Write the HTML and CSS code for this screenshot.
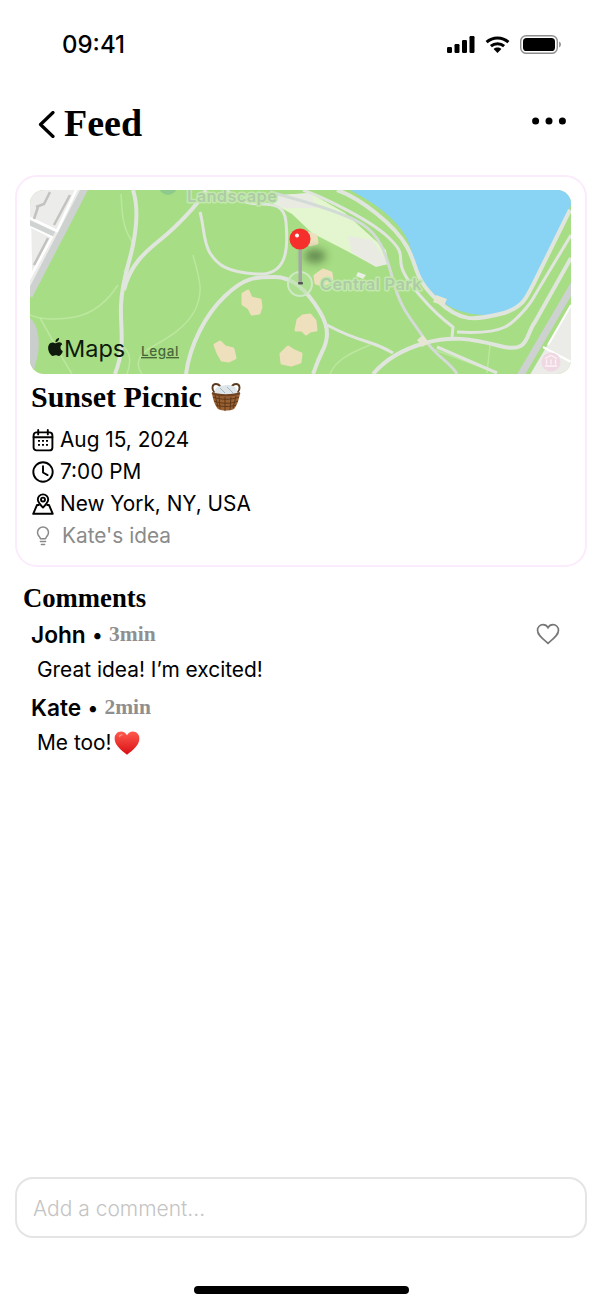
FILE: index.html
```html
<!DOCTYPE html>
<html lang="en">
<head>
<meta charset="utf-8">
<title>Sunset Picnic</title>
<link rel="stylesheet" href="styles.css">
</head>
<body>
<div class="screen">
  <div class="status">
    <span class="time">09:41</span>
    <div class="status-icons">
      <svg class="signal" width="28" height="17" viewBox="0 0 28 17"><rect x="0" y="11" width="5" height="6" rx="1.2"/><rect x="7.5" y="8" width="5" height="9" rx="1.2"/><rect x="15" y="4" width="5" height="13" rx="1.2"/><rect x="22.5" y="0" width="5" height="17" rx="1.2"/></svg>
      <svg class="wifi" width="25" height="17" viewBox="0 0 25 17"><path class="wifi-arc" d="M1.6 6.2C7.6.6 17.4.6 23.4 6.2"/><path class="wifi-arc" d="M5.9 10.2c3.7-3.3 9.5-3.3 13.2 0"/><path d="M12.5 17l-3.9-4.1c2.2-1.9 5.6-1.9 7.8 0z"/></svg>
      <svg class="battery" width="41" height="19" viewBox="0 0 41 19"><rect class="batt-shell" x=".7" y=".7" width="36.6" height="17.6" rx="5.6"/><rect x="3" y="3" width="32" height="13" rx="3.6"/><path class="batt-cap" d="M39 6.5c1.2.4 2 1.6 2 3s-.8 2.6-2 3z"/></svg>
    </div>
  </div>

  <header class="nav">
    <div class="nav-left">
      <svg class="chevron" width="17" height="27" viewBox="0 0 17 27"><path d="M15 1.5L2.5 13.5 15 25.5"/></svg>
      <h1 class="nav-title">Feed</h1>
    </div>
    <svg class="more" width="34" height="8" viewBox="0 0 34 8"><circle cx="3.6" cy="4" r="3.5"/><circle cx="17" cy="4" r="3.5"/><circle cx="30.4" cy="4" r="3.5"/></svg>
  </header>

  <section class="card">
    <svg class="map" width="541" height="184" viewBox="30 190 541 184">
      <defs><filter id="blur" x="-60%" y="-60%" width="220%" height="220%"><feGaussianBlur stdDeviation="4"/></filter></defs>
      <rect class="m-park" x="30" y="190" width="541" height="184"/>

      <!-- west blocks -->
      <path class="m-block" d="M30 190h53l-53 105z"/>
      <path class="m-road-gray-w" d="M86 186L29 296"/>
      <path class="m-edge" d="M77 188L57 231 30 218M52 237L31 276 30 226z"/>
      <path class="m-cross" d="M28 222l26 12"/>
      <path class="m-bld" d="M70 195L54 225M48 238L34 265M50 192l-6 12-8 3M38 207l-4 12"/>
      <path class="m-gray-soft" d="M30 318c8 6 10 22 8 36l-5 20h-3z"/>

      <!-- lake -->
      <path class="m-lake" d="M350 190C375 203 395 218 405 235S412 270 430 290 465 315 490 315 525 298 532 283L571 205V190z"/>

      <!-- pale lawn and plaza -->
      <path class="m-light" d="M262 197L310 193 345 213 386 250 388 264 375 266 345 250 312 233 292 214z"/>
      <path class="m-gray-area" d="M262 196L310 193 318 208 285 208zM348 236L372 240 388 264 376 267 352 253z"/>

      <!-- faint footpaths -->
      <path class="m-thin" d="M121 194C122 210 122 225 130 238S128 262 124 272M30 315C40 320 60 320 75 317S105 305 118 285M40 318C50 335 60 355 72 374M122 345C130 352 132 360 127 374M142 374C135 365 138 355 150 348S185 330 195 310 198 275 193 255M430 348L497 373M490 345L487 373M330 374C335 362 345 355 370 345"/>

      <!-- park roads -->
      <path class="m-road" d="M133 190C138 205 137 225 133 245S122 280 121 305 126 345 115 374"/>
      <path class="m-road" d="M206 190C198 205 175 228 160 240S130 265 124 290"/>
      <path class="m-road-th" d="M200 212C204 225 203 242 210 253S225 272 257 274 288 245 286 222 265 206 250 203 232 194 226 190"/>
      <path class="m-road" d="M186 374C190 345 205 315 225 296S255 277 275 277 310 295 320 312 328 340 322 352 315 370 313 374"/>
      <path class="m-road-th" d="M327 325C340 332 355 338 368 342S388 350 393 353"/>
      <path class="m-road-gray" d="M270 192C300 200 345 213 362 224S385 250 393 280 410 317 423 337 450 362 457 374"/>
      <path class="m-road-th" d="M303 190C325 198 370 220 388 237S398 255 402 268 430 310 453 327L452 337"/>
      <path class="m-road" d="M337 190C360 198 395 225 407 247S413 277 437 300 475 320 500 314 527 295 533 285L570 210"/>
      <path class="m-road-th" d="M457 332C475 333 495 332 505 327S530 305 535 295L571 235"/>
      <path class="m-road" d="M373 374C385 360 400 350 425 343S470 338 500 346 525 335 535 322L571 258"/>
      <path class="m-road-th" d="M437 347L497 373"/>
      <path class="m-tan-pale" d="M423 335l6 8-7 4-5-7zM436 295l11 4-3 7-11-4z"/>

      <!-- east blocks -->
      <path class="m-block-e" d="M528 378L574 300V378z"/>
      <path class="m-road-gray-w" d="M519 378L574 284"/>
      <path class="m-edge-e" d="M543 347L571 362M548 345L571 305"/>
      <circle class="m-pink" cx="551" cy="362" r="9.5"/>
      <path class="m-museum" d="M545 366h12M546.5 359.5v5M551 359.5v5M555.5 359.500v5M545 358.5l6-3 6 3"/>

      <!-- lawns -->
      <path class="m-tan" d="M243 294L248 291 251 298 260 300 261 307 259 313 252 314 249 308 243 304zM298 320L303 316 310 315 315 321 316 330 310 331 306 334 302 330 296 330zM215 345L220 342 225 347 233 349 235 358 229 361 222 360 218 353zM281 354L288 347 294 351 301 354 300 362 291 365 282 363zM315 276L323 270 331 273 332 281 323 285 316 283zM308 233L316 236 317 243 310 245z"/>
      <path class="m-white-bits" d="M358 272L366 275 363 279 356 276zM353 280L359 282 357 287 352 284z"/>

      <!-- labels -->
      <circle class="m-halo-top" cx="168" cy="186" r="9"/>
      <circle class="m-halo" cx="300" cy="284" r="12"/>
      <text class="m-label" x="187" y="202">Landscape</text>
      <text class="m-label" x="320" y="290">Central Park</text>

      <!-- pin -->
      <ellipse class="m-shadow" cx="315" cy="256" rx="11" ry="7" filter="url(#blur)"/>
      <rect class="m-stick" x="298.5" y="249" width="3.5" height="34"/>
      <rect class="m-stick-foot" x="298" y="282" width="5" height="2.5" rx="1"/>
      <circle class="m-pin" cx="300" cy="239" r="10.5"/>
      <circle class="m-pin-dot" cx="297" cy="235.5" r="2"/>

      <!-- attribution -->
      <path class="m-apple" transform="translate(46.5 338) scale(.75)" d="M12.152 6.896c-.948 0-2.415-1.078-3.96-1.04-2.04.027-3.91 1.183-4.961 3.014-2.117 3.675-.546 9.103 1.519 12.09 1.013 1.454 2.208 3.09 3.792 3.039 1.52-.065 2.09-.987 3.935-.987 1.831 0 2.35.987 3.96.948 1.637-.026 2.676-1.48 3.676-2.948 1.156-1.688 1.636-3.325 1.662-3.415-.039-.013-3.182-1.221-3.22-4.857-.026-3.04 2.48-4.494 2.597-4.559-1.429-2.09-3.623-2.324-4.39-2.376-2-.156-3.675 1.09-4.61 1.09zM15.53 3.83c.843-1.012 1.4-2.427 1.245-3.83-1.207.052-2.662.805-3.532 1.818-.78.896-1.454 2.338-1.273 3.714 1.338.104 2.715-.688 3.559-1.701"/>
      <text class="m-maps" x="64" y="357">Maps</text>
      <text class="m-legal" x="141" y="356">Legal</text>
    </svg>

    <h2 class="title">Sunset Picnic
      <svg class="basket" width="32" height="31" viewBox="0 0 32 31">
        <path class="b-handle" d="M5 12C1 8 2 3 6 3s5 4 5 7M27 12c4-4 3-9-1-9s-5 4-5 7"/>
        <path class="b-cloth" d="M5 9c3-5 8-4 11-5 4 0 9 0 11 5l1 5H4z"/>
        <path class="b-fold" d="M10 7l5 5M17 6l6 6"/>
        <path class="b-body" d="M2 12c6 3 22 3 28 0-1 8-4 14-6 16-4 2-12 2-16 0-2-2-5-8-6-16z"/>
        <path class="b-weave" d="M3 16c7 3 19 3 26 0M4 20c7 3 17 3 24 0M6 24c6 2 14 2 20 0M9 15l1 13M15 16v14M21 16l-1 13M26 15l-3 12M5 14l3 12"/>
        <path class="b-rim" d="M2 12c6 3 22 3 28 0"/>
      </svg>
    </h2>

    <ul class="facts">
      <li class="fact">
        <svg class="ico" width="22" height="23" viewBox="0 0 22 23"><rect class="ico-s" x="1.6" y="3.4" width="18.8" height="18" rx="3"/><path class="ico-s" d="M6.2 1v4.4M15.8 1v4.4M1.6 8.2h18.8"/><path class="ico-d" d="M6 11h2v1.7H6zM10 11h2v1.7h-2zM14 11h2v1.7h-2zM6 15h2v1.7H6zM10 15h2v1.7h-2zM14 15h2v1.7h-2z"/></svg>
        <span>Aug 15, 2024</span>
      </li>
      <li class="fact">
        <svg class="ico" width="22" height="22" viewBox="0 0 22 22"><circle class="ico-s" cx="11" cy="11" r="9.7"/><path class="ico-s" d="M11 5.2V11.5l4.6 2.6"/></svg>
        <span>7:00 PM</span>
      </li>
      <li class="fact">
        <svg class="ico" width="22" height="22" viewBox="0 0 22 22"><path class="ico-s" d="M11 14.6c-3-3-5.2-5.2-5.2-8a5.2 5.2 0 0 1 10.4 0c0 2.8-2.2 5-5.2 8z"/><circle class="ico-s" cx="11" cy="6.6" r="2"/><path class="ico-s" d="M6.8 12H5L1.2 20.8h19.6L17 12h-1.8"/></svg>
        <span>New York, NY, USA</span>
      </li>
      <li class="fact fact-muted">
        <svg class="ico-bulb" width="22" height="20" viewBox="0 0 22 20"><path class="bulb-s" d="M8.4 12.8c0-2-2.900-3-2.900-6.300a5.500 5.500 0 0 1 11 0c0 3.300-2.900 4.300-2.900 6.300z"/><path class="bulb-s" d="M8.4 15.6h5.2M9.4 18.4h3.2"/></svg>
        <span>Kate's idea</span>
      </li>
    </ul>
  </section>

  <section class="comments">
    <h3 class="comments-title">Comments</h3>
    <article class="comment">
      <div class="comment-head">
        <span class="author">John</span><span class="sep">•</span><span class="ago">3min</span>
        <svg class="like" width="24" height="22" viewBox="0 0 24 22"><path d="M12 20.3C6.5 15.7 1.5 12 1.5 7.2 1.5 4 4 1.7 7 1.7c2 0 3.900 1 5 3 1.100-2 3-3 5-3 3 0 5.500 2.300 5.500 5.500 0 4.800-5 8.500-10.500 13.100z"/></svg>
      </div>
      <p class="comment-body">Great idea! I’m excited!</p>
    </article>
    <article class="comment">
      <div class="comment-head">
        <span class="author">Kate</span><span class="sep">•</span><span class="ago">2min</span>
      </div>
      <p class="comment-body">Me too!<svg class="heart" width="26" height="24" viewBox="0 0 27 25"><defs><linearGradient id="hg" x1="0" y1="0" x2="0" y2="1"><stop offset="0" stop-color="#ff5a4d"/><stop offset="1" stop-color="#d80f14"/></linearGradient></defs><path fill="url(#hg)" d="M13.5 24.7C6.5 19 .6 14.500.6 7.700.6 3.500 3.700.6 7.300.6c2.700 0 5 1.400 6.200 3.900C14.700 2 17 .6 19.700.6c3.600 0 6.700 2.900 6.700 7.100 0 6.800-5.900 11.300-12.900 17z"/><path class="heart-shine" d="M5 5.200c1-1.500 3-2 4.500-1-1.800.2-3 1-3.700 2.500z"/></svg></p>
    </article>
  </section>

  <div class="composer">
    <div class="composer-box">Add a comment...</div>
  </div>
  <div class="home-wrap"><div class="home"></div></div>
</div>
</body>
</html>
```

FILE: styles.css
```css
* { box-sizing: border-box; }
html, body { margin: 0; padding: 0; background: #fff; }
.screen {
  width: 602px;
  height: 1306px;
  display: flex;
  flex-direction: column;
  overflow: hidden;
  font-family: Inter, "Liberation Sans", sans-serif;
  color: #000;
  background: #fff;
}
.status {
  height: 88px;
  padding: 0 41px 0 62px;
  display: flex;
  align-items: center;
  justify-content: space-between;
}
.time { font-size: 24px; font-weight: 500; line-height: 1; padding-top: 2px; }
.status-icons { display: flex; align-items: center; gap: 10px; }
.batt-shell { fill: none; stroke: #8e8e8e; stroke-width: 1.4; }
.batt-cap { fill: #9a9a9a; }
.wifi-arc { fill: none; stroke: #000; stroke-width: 3; }

.nav {
  height: 70px;
  padding: 0 36px 0 38px;
  display: flex;
  align-items: center;
  justify-content: space-between;
}
.nav-left { display: flex; align-items: center; gap: 9px; }
.chevron { fill: none; stroke: #000; stroke-width: 3.2; stroke-linecap: round; stroke-linejoin: round; margin-top: 3px; }
.nav-title {
  margin: 0;
  font: 700 38px/1 "Liberation Serif", serif;
}
.more { margin-top: -4px; }

.card {
  margin: 17px 15px 0;
  height: 392px;
  padding: 13px 14px 0 13px;
  border: 2px solid #fcebfd;
  border-radius: 22px;
}
.map { display: block; border-radius: 14px; }
.m-park { fill: #a7dd84; }
.m-block { fill: #ececea; }
.m-block-e { fill: #ebebe8; }
.m-road-gray-w { fill: none; stroke: #cdd2d1; stroke-width: 7; }
.m-edge { fill: none; stroke: #fff; stroke-width: 2.5; }
.m-edge-e { fill: none; stroke: #fff; stroke-width: 2; }
.m-cross { fill: none; stroke: #cfd4d3; stroke-width: 5; }
.m-bld { fill: none; stroke: #c2c2bf; stroke-width: 2.5; }
.m-gray-soft { fill: #c9cdcb; }
.m-lake { fill: #89d3f5; }
.m-light { fill: #e3f6d0; }
.m-gray-area { fill: #e9ebe3; }
.m-road { fill: none; stroke: #e0e6de; stroke-width: 4; stroke-linejoin: round; }
.m-road-th { fill: none; stroke: #e0e6de; stroke-width: 3; stroke-linejoin: round; }
.m-road-gray { fill: none; stroke: #d3dbd6; stroke-width: 3; stroke-linejoin: round; }
.m-thin { fill: none; stroke: #bce79f; stroke-width: 1.5; stroke-linejoin: round; }
.m-pink { fill: #f0d8e2; }
.m-museum { fill: none; stroke: #fbf3f6; stroke-width: 1.3; }
.m-tan { fill: #eee0bd; stroke: #eee0bd; stroke-width: 3; stroke-linejoin: round; }
.m-tan-pale { fill: #e6e6d2; }
.m-white-bits { fill: #e8efe3; }
.m-halo { fill: #b3e09d; fill-opacity: .55; stroke: #cfe9c4; stroke-width: 2; }
.m-halo-top { fill: #8dca8b; }
.m-label { font: 600 16.5px Inter, sans-serif; fill: #aecba6; letter-spacing: .3px; paint-order: stroke; stroke: #c2e9ac; stroke-width: 3px; stroke-linejoin: round; }
.m-shadow { fill: #2f4a25; opacity: .55; }
.m-stick { fill: #a6a6a6; }
.m-stick-foot { fill: #555; }
.m-pin { fill: #f62f2c; }
.m-pin-dot { fill: #fff; }
.m-apple { fill: #0e1a0b; }
.m-maps { font: 400 23.5px Inter, sans-serif; fill: #0e1a0b; }
.m-legal { font: 500 13.5px Inter, sans-serif; fill: #47693a; letter-spacing: .6px; text-decoration: underline; }

.title {
  margin: 0;
  height: 45px;
  padding-left: 1px;
  display: flex;
  align-items: center;
  gap: 8px;
  font: 700 30px/1 "Liberation Serif", serif;
}
.basket { flex: none; }
.b-handle { fill: none; stroke: #5c3a1e; stroke-width: 1.8; }
.b-cloth { fill: #dfe6ea; }
.b-fold { fill: none; stroke: #a9b6bf; stroke-width: 1; }
.b-body { fill: #9a6233; }
.b-weave { fill: none; stroke: #5f3818; stroke-width: 1; }
.b-rim { fill: none; stroke: #6d4220; stroke-width: 2; }

.facts { list-style: none; margin: 0; padding: 5px 0 0; }
.fact {
  height: 32px;
  display: flex;
  align-items: center;
  gap: 6px;
  padding-left: 2px;
  font-size: 20.8px;
  line-height: 1;
}
.ico { flex: none; }
.ico-s { fill: none; stroke: #000; stroke-width: 1.9; stroke-linejoin: round; stroke-linecap: round; }
.ico-d { fill: #000; }
.fact-muted { color: #8a8a8a; gap: 8px; }
.ico-bulb { flex: none; }
.bulb-s { fill: none; stroke: #8a8a8a; stroke-width: 1.5; stroke-linecap: round; stroke-linejoin: round; }

.comments { padding: 14px 0 0 23px; }
.comments-title {
  margin: 0;
  font: 700 26.7px/34px "Liberation Serif", serif;
}
.comment { padding-left: 8px; }
.comment-head {
  height: 40px;
  display: flex;
  align-items: center;
  padding-right: 42px;
}
.author { font-size: 22.7px; font-weight: 600; line-height: 1; }
.sep { font-size: 20px; margin: 0 6px; line-height: 1; }
.ago { font: 700 21.5px/1 "Liberation Serif", serif; color: #8f8f8f; }
.like { margin: -2px 0 0 auto; fill: none; stroke: #777; stroke-width: 1.7; }
.comment-body {
  margin: 0 0 5px;
  height: 28px;
  padding: 2px 0 0 6px;
  display: flex;
  align-items: center;
  font-size: 20.9px;
  line-height: 1;
}
.heart { flex: none; margin-left: 2px; }
.heart-shine { fill: #ff9a90; }

.composer { margin-top: auto; padding: 0 15px; }
.composer-box {
  height: 61px;
  padding: 1px 16px 0;
  display: flex;
  align-items: center;
  border: 2px solid #e5e5e5;
  border-radius: 18px;
  color: #c4c4c4;
  font-size: 21px;
  font-weight: 300;
}
.home-wrap { height: 68px; padding-top: 48px; display: flex; justify-content: center; }
.home { width: 215px; height: 8px; border-radius: 4px; background: #000; }
```
